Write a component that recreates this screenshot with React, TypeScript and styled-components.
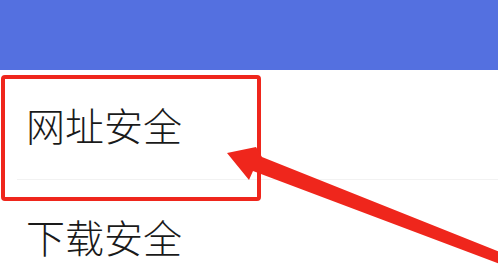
import * as React from 'react'
import styled, { createGlobalStyle } from 'styled-components'

const GlobalStyle = createGlobalStyle`
    html, body {
        margin: 0;
        padding: 0;
        background: #ffffff;
    }
    body {
        font-family: "Noto Sans CJK SC", "Noto Sans", sans-serif;
        overflow: hidden;
    }
`

const Page = styled.div`
    position: relative;
    width: 498px;
    height: 269px;
    overflow: hidden;
    background: #ffffff;
`

const TopBar = styled.div`
    height: 70px;
    background: #5470e0;
`

const List = styled.div`
    display: flex;
    flex-direction: column;
`

const Item = styled.div`
    position: relative;
    display: flex;
    align-items: center;
    height: 112px;
    padding-left: 26px;
    font-size: 39px;
    font-weight: 300;
    color: #1a1a1a;
    margin-top: -2px;

    &::after {
        content: '';
        position: absolute;
        left: 17px;
        right: 0;
        bottom: 0;
        height: 1px;
        background: #f2f2f2;
    }

    & + & {
        margin-top: 0;
    }
`

// annotation overlay: the red frame drawn over the first row
const HighlightBox = styled.div`
    position: absolute;
    left: 1px;
    top: 75px;
    width: 252px;
    height: 118px;
    border: 4px solid #ef261c;
    border-radius: 4px;
`

const ArrowLayer = styled.svg`
    position: absolute;
    left: 0;
    top: 0;
    pointer-events: none;
`

const items: string[] = ['网址安全', '下载安全']

const App: React.FunctionComponent = (): React.ReactElement => {
    return (
        <Page>
            <GlobalStyle />
            <TopBar />
            <List>
                {items.map((label: string) => <Item key={label}>{label}</Item>)}
            </List>
            <HighlightBox />
            <ArrowLayer width="498" height="269" viewBox="0 0 498 269">
                <polygon
                    points="227,153 256,147 262,157 500,252 500,264 253,171 249,180"
                    fill="#ef261c"
                />
            </ArrowLayer>
        </Page>
    )
}

export default App
